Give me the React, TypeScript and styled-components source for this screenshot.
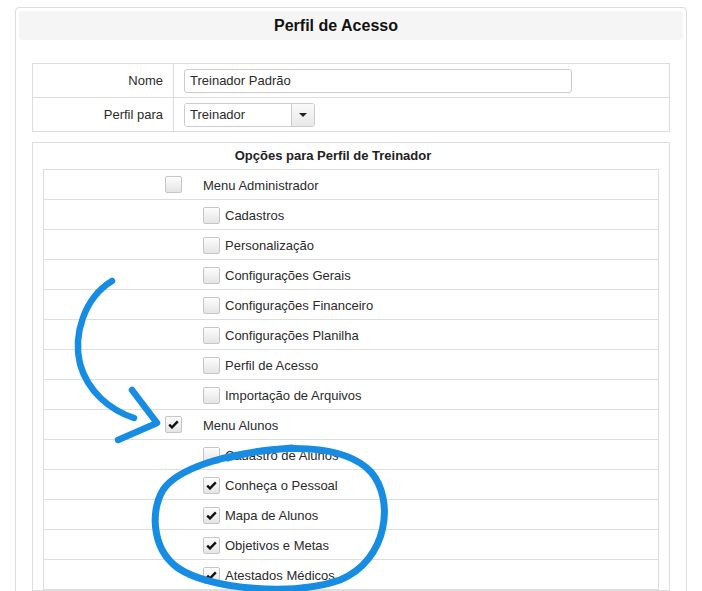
import styled, { createGlobalStyle } from 'styled-components';

const GlobalStyle = createGlobalStyle`
  html, body {
    margin: 0;
    padding: 0;
    background: #fff;
  }
  body {
    font-family: "Liberation Sans", Arial, sans-serif;
    font-size: 13px;
    color: #2b2b2b;
  }
`;

type Item = { label: string; checked: boolean; child?: boolean };

const items: Item[] = [
  { label: 'Menu Administrador', checked: false },
  { label: 'Cadastros', checked: false, child: true },
  { label: 'Personalização', checked: false, child: true },
  { label: 'Configurações Gerais', checked: false, child: true },
  { label: 'Configurações Financeiro', checked: false, child: true },
  { label: 'Configurações Planilha', checked: false, child: true },
  { label: 'Perfil de Acesso', checked: false, child: true },
  { label: 'Importação de Arquivos', checked: false, child: true },
  { label: 'Menu Alunos', checked: true },
  { label: 'Cadastro de Alunos', checked: false, child: true },
  { label: 'Conheça o Pessoal', checked: true, child: true },
  { label: 'Mapa de Alunos', checked: true, child: true },
  { label: 'Objetivos e Metas', checked: true, child: true },
  { label: 'Atestados Médicos', checked: true, child: true },
];

function CheckBox({ checked }: { checked: boolean }) {
  return (
    <Box>
      {checked && (
        <svg width="11" height="9" viewBox="0 0 11 9">
          <path d="M1.2 4.6 L4 7.4 L9.8 1.4" fill="none" stroke="#111" strokeWidth="2.4" />
        </svg>
      )}
    </Box>
  );
}

function App() {
  return (
    <>
      <GlobalStyle />
      <Page>
        <Panel>
          <Header>Perfil de Acesso</Header>

          <FormTable>
            <FormRow>
              <Label>Nome</Label>
              <Field>
                <TextInput defaultValue="Treinador Padrão" />
              </Field>
            </FormRow>
            <FormRow $last>
              <Label>Perfil para</Label>
              <Field>
                <Select>
                  <SelectValue>Treinador</SelectValue>
                  <SelectButton>
                    <Caret />
                  </SelectButton>
                </Select>
              </Field>
            </FormRow>
          </FormTable>

          <OptionsBox>
            <OptionsTitle>Opções para Perfil de Treinador</OptionsTitle>
            <OptionsTable>
              {items.map((item) => (
                <OptionRow key={item.label}>
                  <ParentCell>{!item.child && <CheckBox checked={item.checked} />}</ParentCell>
                  <NameCell>
                    {item.child ? (
                      <ChildLabel>
                        <CheckBox checked={item.checked} />
                        <span>{item.label}</span>
                      </ChildLabel>
                    ) : (
                      item.label
                    )}
                  </NameCell>
                </OptionRow>
              ))}
            </OptionsTable>
          </OptionsBox>
        </Panel>

        <Annotations width="702" height="591" viewBox="0 0 702 591">
          <g fill="none" stroke="#168de2" strokeLinecap="round" strokeLinejoin="round">
            <path d="M112 281 C 84 298 73 335 80 364 C 88 392 110 410 134 418" strokeWidth="6.5" />
            <path d="M132 390 L157 423 L118 440" strokeWidth="6.5" />
            <path
              d="M228 458 C 278 444 344 443 371 472 C 395 500 388 560 340 580 C 294 596 210 590 178 568 C 150 548 150 505 166 486 C 184 466 232 452 292 448"
              strokeWidth="7"
            />
          </g>
        </Annotations>
      </Page>
    </>
  );
}

export default App;

const Page = styled.div`
  position: relative;
  height: 591px;
  overflow: hidden;
  padding: 7px 15px 0;
  box-sizing: border-box;
`;

const Panel = styled.div`
  border: 1px solid #ddd;
  border-radius: 4px;
  padding: 3px 3px 0;
  height: 700px;
`;

const Header = styled.div`
  background: #f5f5f5;
  border-radius: 4px;
  height: 29px;
  display: flex;
  align-items: center;
  justify-content: center;
  padding-right: 30px;
  font-size: 16px;
  font-weight: bold;
  color: #111;
  margin-bottom: 23px;
`;

const FormTable = styled.div`
  margin: 0 13px;
  border: 1px solid #ddd;
`;

const FormRow = styled.div<{ $last?: boolean }>`
  display: grid;
  grid-template-columns: 141px 1fr;
  height: 33px;
  border-bottom: ${(p) => (p.$last ? 'none' : '1px solid #ddd')};
`;

const Label = styled.div`
  border-right: 1px solid #ddd;
  display: flex;
  align-items: center;
  justify-content: flex-end;
  padding-right: 10px;
`;

const Field = styled.div`
  display: flex;
  align-items: center;
  padding-left: 10px;
`;

const TextInput = styled.input`
  width: 388px;
  height: 24px;
  box-sizing: border-box;
  border: 1px solid #ccc;
  border-radius: 3px;
  padding: 0 5px;
  font-family: "Liberation Sans", Arial, sans-serif;
  font-size: 13px;
  color: #2b2b2b;
  outline: none;
`;

const Select = styled.div`
  width: 131px;
  height: 24px;
  box-sizing: border-box;
  border: 1px solid #ccc;
  border-radius: 3px;
  display: flex;
  overflow: hidden;
`;

const SelectValue = styled.div`
  flex: 1;
  display: flex;
  align-items: center;
  padding-left: 5px;
  background: #fff;
`;

const SelectButton = styled.div`
  width: 22px;
  border-left: 1px solid #ccc;
  background: linear-gradient(#fafafa, #e8e8e8);
  display: flex;
  align-items: center;
  justify-content: center;
`;

const Caret = styled.span`
  width: 0;
  height: 0;
  border-left: 4px solid transparent;
  border-right: 4px solid transparent;
  border-top: 4px solid #222;
`;

const OptionsBox = styled.div`
  margin: 10px 13px 0;
  border: 1px solid #ddd;
  padding: 0 10px;
`;

const OptionsTitle = styled.div`
  height: 26px;
  display: flex;
  align-items: center;
  justify-content: center;
  padding-right: 36px;
  padding-bottom: 2px;
  box-sizing: border-box;
  font-weight: bold;
  color: #222;
`;

const OptionsTable = styled.div`
  border: 1px solid #ddd;
  border-bottom: none;
`;

const OptionRow = styled.div`
  display: grid;
  grid-template-columns: 148px 1fr;
  height: 29px;
  border-bottom: 1px solid #ddd;
`;

const ParentCell = styled.div`
  display: flex;
  align-items: center;
  justify-content: flex-end;
  padding-right: 10px;
`;

const NameCell = styled.div`
  display: flex;
  align-items: center;
  padding-left: 11px;
  padding-top: 1px;
`;

const ChildLabel = styled.label`
  display: flex;
  align-items: center;
  gap: 5px;
`;

const Box = styled.span`
  width: 17px;
  height: 17px;
  box-sizing: border-box;
  border: 1px solid #c6c6c6;
  border-radius: 2px;
  background: linear-gradient(#fdfdfd, #e4e4e4);
  display: inline-flex;
  align-items: center;
  justify-content: center;
`;

const Annotations = styled.svg`
  position: absolute;
  left: 0;
  top: 0;
  pointer-events: none;
`;
